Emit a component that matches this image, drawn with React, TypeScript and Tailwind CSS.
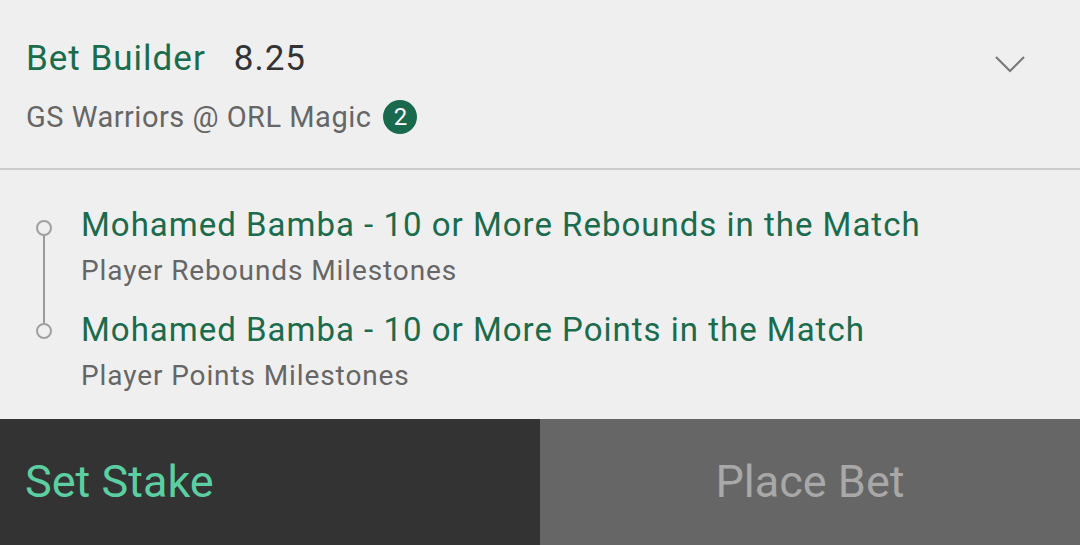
import React from "react";

export default function App() {
  return (
    <div
      className="w-[1080px] h-[545px] bg-[#efefef] flex flex-col overflow-hidden"
      style={{ fontFamily: "Roboto, 'Liberation Sans', sans-serif" }}
    >
      {/* Header */}
      <div className="h-[168px] flex flex-row pl-[26px] pr-[54px]">
        <div className="flex-1 flex flex-col pt-[39px]">
          <div className="flex items-center h-[40px]">
            <span className="text-[35px] leading-[40px] tracking-[1px] text-[#1b6b4d]">Bet Builder</span>
            <span className="text-[35px] leading-[40px] tracking-[1px] text-[#333333] ml-[28px]">8.25</span>
          </div>
          <div className="flex items-center h-[36px] mt-[20px]">
            <span className="text-[29px] leading-[36px] tracking-[0.5px] text-[#666666]">GS Warriors @ ORL Magic</span>
            <span className="ml-[12px] w-[34px] h-[34px] rounded-full bg-[#19694d] text-white text-[24px] flex items-center justify-center">
              2
            </span>
          </div>
        </div>
        <div className="pt-[54px]">
          <svg width="32" height="20" viewBox="0 0 32 20" fill="none">
            <path d="M2 3 L16 17 L30 3" stroke="#7a7a7a" strokeWidth="2.2" />
          </svg>
        </div>
      </div>
      <div className="h-[2px] bg-[#cccccc]" />

      {/* Selections */}
      <div className="relative flex flex-col pt-[35px] h-[249px]">
        <div className="absolute left-[43px] top-[65px] w-[2px] h-[88px] bg-[#9a9a9a]" />
        <div className="flex flex-row">
          <div className="w-[81px] pl-[36px]">
            <div className="mt-[15px] w-[16px] h-[16px] rounded-full border-2 border-[#a0a0a0] bg-[#efefef]" />
          </div>
          <div className="flex flex-col">
            <span className="text-[33px] leading-[40px] tracking-[1px] text-[#1b6b4d]">Mohamed Bamba - 10 or More Rebounds in the Match</span>
            <span className="text-[28px] leading-[34px] tracking-[0.9px] text-[#666666] mt-[9px]">Player Rebounds Milestones</span>
          </div>
        </div>
        <div className="flex flex-row mt-[22px]">
          <div className="w-[81px] pl-[36px]">
            <div className="mt-[13px] w-[16px] h-[16px] rounded-full border-2 border-[#a0a0a0] bg-[#efefef]" />
          </div>
          <div className="flex flex-col">
            <span className="text-[33px] leading-[40px] tracking-[1px] text-[#1b6b4d]">Mohamed Bamba - 10 or More Points in the Match</span>
            <span className="text-[28px] leading-[34px] tracking-[0.9px] text-[#666666] mt-[9px]">Player Points Milestones</span>
          </div>
        </div>
      </div>

      {/* Buttons */}
      <div className="flex flex-row flex-1">
        <div className="w-[540px] bg-[#333333] flex items-center pl-[25px]">
          <span className="text-[45px] text-[#5ccfa2]">Set Stake</span>
        </div>
        <div className="flex-1 bg-[#666666] flex items-center justify-center">
          <span className="text-[45px] text-[#a8a8a8]">Place Bet</span>
        </div>
      </div>
    </div>
  );
}
